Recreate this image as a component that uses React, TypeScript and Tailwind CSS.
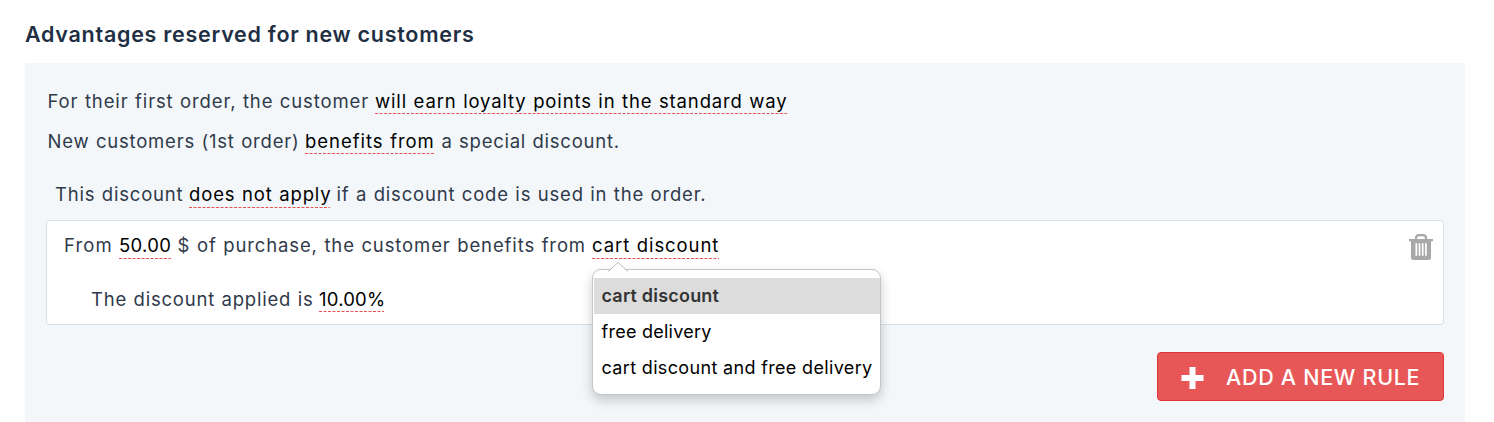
import type { ReactNode } from "react";

function Copy({ children, className = "" }: { children: ReactNode; className?: string }) {
  return <span className={`block shrink-0 whitespace-pre [word-spacing:0.5px] ${className}`}>{children}</span>;
}

function Editable({ children, className = "" }: { children: ReactNode; className?: string }) {
  return (
    <button
      type="button"
      className={`relative flex shrink-0 items-start text-left whitespace-pre text-black [word-spacing:0.5px] ${className}`}
    >
      {children}
      <svg className="absolute bottom-0 left-0 h-px w-full" aria-hidden="true">
        <line x1="0" y1="0.5" x2="100%" y2="0.5" stroke="#e85454" strokeWidth="1" strokeDasharray="3 1.5" />
      </svg>
    </button>
  );
}

function TrashIcon() {
  return (
    <svg width="24" height="27" viewBox="0 0 24 27" fill="none" aria-hidden="true">
      <path d="M7 6V4.2Q7 1.2 10 1.2H14Q17 1.2 17 4.2V6" stroke="#a8a8a8" strokeWidth="2.2" />
      <path d="M0 5H24V7.2H22V24Q22 26 19.5 26H4.5Q2 26 2 24V7.2H0Z" fill="#a8a8a8" />
      <path d="M7.3 9.2V21.8M10.5 9.2V21.8M13.7 9.2V21.8M16.9 9.2V21.8" stroke="#fff" strokeWidth="1.7" />
    </svg>
  );
}

function Menu() {
  return (
    <div className="absolute top-[35px] left-0 z-10 h-[126px] w-[289px] rounded-[9px] border border-[#c5c5c5] bg-white pt-2 text-[18px] leading-6 text-black shadow-[0_5px_12px_rgba(0,0,0,0.2)]">
      <svg className="absolute -top-[9px] left-[14px]" width="22" height="12" viewBox="0 0 22 12" aria-hidden="true">
        <path d="M1 11L11 1.5L21 11Z" fill="#fff" />
        <path d="M1 10.5L11 1.5L21 10.5" fill="none" stroke="#bdbdbd" strokeWidth="1" />
      </svg>
      <div className="relative ml-px flex h-9 items-center bg-[#dcdcdc] pl-[7.5px] font-semibold tracking-[0.2px] text-[#333]">cart discount</div>
      <div className="flex h-9 items-center pl-[8.5px] tracking-[0.25px]">free delivery</div>
      <div className="flex h-9 items-center pl-[8.5px] tracking-[0.34px] whitespace-nowrap">cart discount and free delivery</div>
    </div>
  );
}

export default function App() {
  return (
    <main className="h-[422px] overflow-hidden bg-white pl-[25px] font-['Inter','Liberation_Sans',sans-serif]">
      <h2 className="h-[63px] pt-[22px] text-[21.5px] leading-6 font-semibold tracking-[0.73px] text-[#1f2f44]">
        Advantages reserved for new customers
      </h2>
      <section className="h-[359px] w-[1440px] bg-[#f3f7fa] pt-[27px] pr-[21px] pl-[21px] text-[18.5px] leading-[22px] tracking-[0.5px] text-[#2f3a4b]">
        <div className="ml-[1.5px] flex h-10 items-start">
          <Copy className="w-[327.5px] tracking-[0.87px]">For their first order, the customer </Copy>
          <Editable className="h-6 w-[412px] tracking-[0.86px]">will earn loyalty points in the standard way</Editable>
        </div>
        <div className="ml-[1.5px] flex h-[54px] items-start">
          <Copy className="w-[257.5px] tracking-[0.79px]">New customers (1st order) </Copy>
          <Editable className="h-6 w-[130px] tracking-[0.96px]">benefits from</Editable>
          <Copy className="tracking-[0.75px]"> a special discount.</Copy>
        </div>
        <div className="-mt-px ml-[9px] flex h-[37px] items-start">
          <Copy className="w-[134px] tracking-[0.8px]">This discount </Copy>
          <Editable className="h-[25px] w-[141px] tracking-[0.86px]">does not apply</Editable>
          <Copy className="tracking-[0.81px]"> if a discount code is used in the order.</Copy>
        </div>
        <div className="flex h-[105px] justify-between rounded-[3px] border border-[#dbdfe3] bg-white pt-[13px] pr-[10px] pl-[17px]">
          <div>
            <div className="flex h-[54px] items-start">
              <Copy className="w-[55px] tracking-[1.1px]">From </Copy>
              <Editable className="h-[25px] w-[52px] tracking-[0.3px]">50.00</Editable>
              <Copy className="w-[421px] tracking-[0.88px]"> $ of purchase, the customer benefits from </Copy>
              <div className="relative">
                <Editable className="h-[25px] w-[127px] tracking-[0.92px]">cart discount</Editable>
                <Menu />
              </div>
            </div>
            <div className="ml-[27px] flex items-start">
              <Copy className="w-[228px] tracking-[0.79px]">The discount applied is </Copy>
              <Editable className="h-6 w-[65px] tracking-[0.2px]">10.00%</Editable>
            </div>
          </div>
          <button type="button" aria-label="Delete rule" className="h-[27px] w-6">
            <TrashIcon />
          </button>
        </div>
        <div className="mt-[27px] flex justify-end">
          <button
            type="button"
            className="flex h-[49px] w-[287px] items-center rounded-[4px] border border-[#de3434] bg-[#e85757] pt-0.5 pl-[23px] text-[21.5px] font-medium text-white"
          >
            <svg width="23" height="22" viewBox="0 0 23 22" aria-hidden="true">
              <path d="M8.5 0H14.5V8H22.5V14H14.5V22H8.5V14H0.5V8H8.5Z" fill="#fff" />
            </svg>
            <span className="-mt-0.5 ml-[22px] tracking-[0.7px] whitespace-nowrap">ADD A NEW RULE</span>
          </button>
        </div>
      </section>
    </main>
  );
}
